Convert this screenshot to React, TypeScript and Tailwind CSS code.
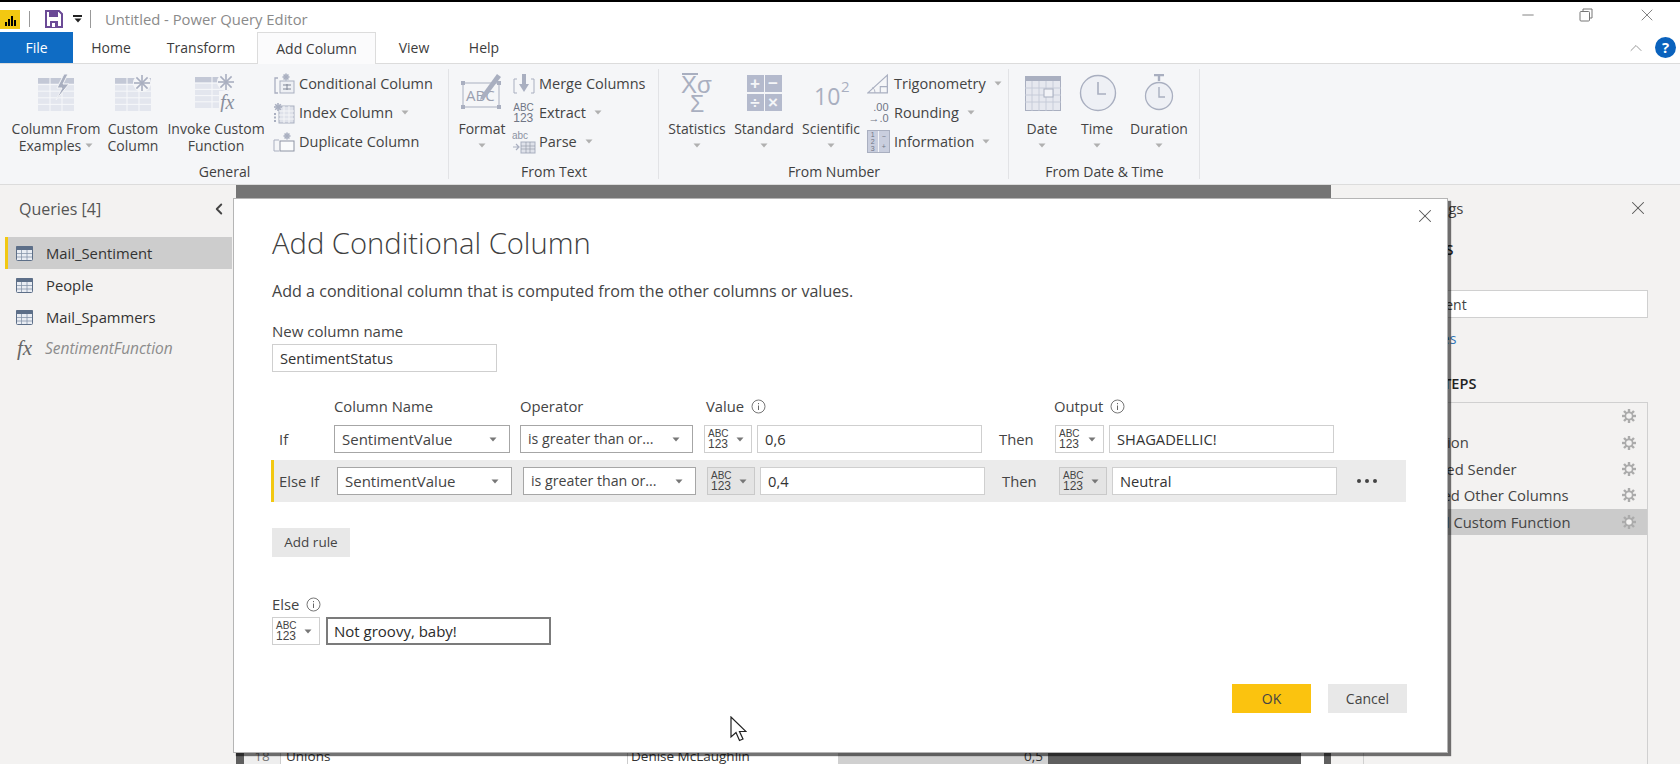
import type { ReactNode } from 'react'
import { X, ChevronLeft, ChevronUp, Minus } from 'lucide-react'

const pale = '#c3c8d6'
const paleDark = '#a9afc0'

function Caret({ className = '' }: { className?: string }) {
  return (
    <svg width="8" height="5" viewBox="0 0 8 5" className={className}>
      <path d="M0.5 0.5h7L4 4.5z" fill="currentColor" />
    </svg>
  )
}

function Burst({ x, y, r = 7 }: { x: number; y: number; r?: number }) {
  return (
    <g stroke={paleDark} strokeWidth="1.6">
      <line x1={x - r} y1={y} x2={x + r} y2={y} />
      <line x1={x} y1={y - r} x2={x} y2={y + r} />
      <line x1={x - r * 0.7} y1={y - r * 0.7} x2={x + r * 0.7} y2={y + r * 0.7} />
      <line x1={x - r * 0.7} y1={y + r * 0.7} x2={x + r * 0.7} y2={y - r * 0.7} />
    </g>
  )
}

function Grid({ x, y, w, h, cols, rows }: { x: number; y: number; w: number; h: number; cols: number; rows: number }) {
  const cells = []
  for (let i = 1; i < cols; i++) cells.push(<line key={`c${i}`} x1={x + (w * i) / cols} y1={y} x2={x + (w * i) / cols} y2={y + h} />)
  for (let i = 1; i < rows; i++) cells.push(<line key={`r${i}`} x1={x} y1={y + (h * i) / rows} x2={x + w} y2={y + (h * i) / rows} />)
  return (
    <g>
      <rect x={x} y={y} width={w} height={h} fill="#e3e6ee" />
      <rect x={x} y={y} width={w} height={h * 0.17} fill={pale} />
      <g stroke="#f7f8fa" strokeWidth="1">{cells}</g>
    </g>
  )
}

function ExamplesIcon() {
  return (
    <svg width="38" height="38" viewBox="0 0 38 38">
      <Grid x={1} y={4} w={36} h={33} cols={3} rows={5} />
      <path d="M27 0l-7 14h5l-6 12 13-16h-6l5-10z" fill={paleDark} stroke="#f5f6f8" strokeWidth="1" />
    </svg>
  )
}

function CustomIcon() {
  return (
    <svg width="38" height="38" viewBox="0 0 38 38">
      <Grid x={1} y={4} w={36} h={33} cols={3} rows={5} />
      <circle cx="28" cy="9" r="9" fill="#f5f6f8" />
      <Burst x={28} y={9} r={8} />
    </svg>
  )
}

function InvokeIcon() {
  return (
    <svg width="42" height="40" viewBox="0 0 42 40">
      <Grid x={0} y={5} w={34} h={31} cols={2} rows={5} />
      <circle cx="31" cy="10" r="9" fill="#f5f6f8" />
      <Burst x={31} y={10} r={8} />
      <rect x="24" y="19" width="18" height="21" fill="#f5f6f8" />
      <text x="25" y="37" fontSize="20" fontStyle="italic" fontFamily="Liberation Serif, serif" fill="#8a8f9d">fx</text>
    </svg>
  )
}

function ConditionalIcon() {
  return (
    <svg width="22" height="22" viewBox="0 0 22 22">
      <path d="M5 5H2v15h3" fill="none" stroke={paleDark} strokeWidth="1.3" />
      <rect x="7" y="8" width="14" height="12" fill="#eef0f4" stroke={paleDark} />
      <path d="M10 12h8M10 16h8M14 11v6" stroke="#7f8595" strokeWidth="1" />
      <Burst x={13} y={4} r={3.5} />
    </svg>
  )
}

function IndexIcon() {
  return (
    <svg width="22" height="22" viewBox="0 0 22 22">
      <rect x="6" y="4" width="15" height="17" fill="#dfe2ea" stroke={paleDark} />
      <path d="M11 4v17M16 4v17M6 9h15M6 13h15M6 17h15" stroke="#f5f6f8" />
      <Burst x={5} y={5} r={4} />
      <path d="M2 11v9" stroke={paleDark} strokeDasharray="2 1.5" strokeWidth="2" />
    </svg>
  )
}

function DuplicateIcon() {
  return (
    <svg width="22" height="22" viewBox="0 0 22 22">
      <path d="M6 9H1v11h5" fill="none" stroke={paleDark} />
      <rect x="7" y="10" width="14" height="10" fill="#fafbfc" stroke="#8e94a4" />
      <Burst x={14} y={5} r={3.5} />
    </svg>
  )
}

function FormatIcon() {
  return (
    <svg width="42" height="42" viewBox="0 0 42 42">
      <rect x="2" y="13" width="36" height="24" fill="none" stroke={paleDark} strokeWidth="1" />
      <g fill={paleDark}>
        <rect x="0" y="11" width="4" height="4" />
        <rect x="36" y="11" width="4" height="4" />
        <rect x="0" y="35" width="4" height="4" />
        <rect x="36" y="35" width="4" height="4" />
      </g>
      <text x="5" y="31" fontSize="15" fontFamily="Open Sans, sans-serif" fill="#9aa0b0">ABC</text>
      <path d="M20 26L36 4l4 3-16 21-5 2z" fill={paleDark} />
    </svg>
  )
}

function MergeIcon() {
  return (
    <svg width="22" height="22" viewBox="0 0 22 22">
      <path d="M4 6H1v14h3M18 6h3v14h-3" fill="none" stroke={paleDark} />
      <rect x="9" y="1" width="4" height="11" fill={paleDark} />
      <path d="M6 11h10l-5 8z" fill={paleDark} />
    </svg>
  )
}

function ParseIcon() {
  return (
    <span className="relative block w-[24px] h-[24px] text-[#8d93a3]">
      <span className="absolute left-0 top-0 text-[10px] leading-[11px] font-['Liberation_Sans',sans-serif]">abc</span>
      <svg width="24" height="24" viewBox="0 0 24 24" className="absolute left-0 top-0">
        <path d="M1 17h5M4 14l3 3-3 3" fill="none" stroke={paleDark} strokeWidth="1.2" />
        <rect x="9" y="12" width="14" height="11" fill="#dfe2ea" stroke={paleDark} />
        <path d="M14 12v11M18 12v11M9 16h14M9 19h14" stroke="#8d93a3" strokeWidth="0.6" />
      </svg>
    </span>
  )
}

function TrigIcon() {
  return (
    <svg width="26" height="24" viewBox="0 0 26 24">
      <path d="M1 22L23 2v20z" fill="none" stroke={paleDark} strokeWidth="1.4" />
      <path d="M15 22v-7h8" fill="none" stroke={paleDark} strokeWidth="1.2" />
      <path d="M9 22c0-3-1-5-3-6" fill="none" stroke={paleDark} />
    </svg>
  )
}

function InformationIcon() {
  return (
    <span className="flex w-[23px] h-[23px] bg-[#c9cede] border border-[#a9afc0] text-[7px] leading-[7px] text-[#f5f6f8] font-['Liberation_Sans',sans-serif]">
      <span className="w-1/2 flex flex-col justify-around items-center border-r border-[#f5f6f8] text-[#6f7585]">
        <span>1</span>
        <span>2</span>
        <span>3</span>
      </span>
      <span className="w-1/2 flex flex-col justify-around items-center text-[#6f7585]">
        <span>−</span>
        <span>+</span>
      </span>
    </span>
  )
}

function StatisticsIcon() {
  return (
    <svg width="40" height="44" viewBox="0 0 40 44" fill={paleDark} fontFamily="Liberation Sans, sans-serif" className="-mb-[4px] translate-x-[2px]">
      <rect x="3" y="1" width="16" height="2" />
      <text x="2" y="21" fontSize="24">Xσ</text>
      <text x="11" y="40" fontSize="23">Σ</text>
    </svg>
  )
}

function StandardIcon() {
  const cell = 'flex items-center justify-center bg-[#b4bacd] text-[#f5f6f8] text-[17px] font-bold leading-none w-[17px] h-[17px]'
  return (
    <span className="grid grid-cols-[17px_17px] grid-rows-[18px_18px] gap-[1px] font-['Liberation_Sans',sans-serif]">
      <span className={cell}>+</span>
      <span className={cell}>−</span>
      <span className={cell}>÷</span>
      <span className={cell}>×</span>
    </span>
  )
}

function ScientificIcon() {
  return (
    <svg width="38" height="42" viewBox="0 0 38 42" fill={paleDark} fontFamily="Open Sans, sans-serif" className="translate-x-[2px]">
      <text x="0" y="35" fontSize="23">10</text>
      <text x="27" y="22" fontSize="15">2</text>
    </svg>
  )
}

function DateIcon() {
  return (
    <svg width="36" height="36" viewBox="0 0 36 36" className="translate-x-[1px]">
      <rect x="0.5" y="0.5" width="35" height="34" fill="#e6e8ef" stroke={paleDark} />
      <rect x="0" y="0" width="36" height="5" fill={paleDark} />
      <path d="M7 5v30M14 5v30M21 5v30M28 5v30M0 12h36M0 19h36M0 26h36" stroke="#c4c9d7" strokeWidth="0.9" />
      <rect x="19" y="13" width="9" height="8" fill="#f2f3f7" stroke={paleDark} />
    </svg>
  )
}

function TimeIcon() {
  return (
    <svg width="38" height="38" viewBox="0 0 38 38" className="translate-x-[1px]">
      <circle cx="19" cy="19" r="17.5" fill="#eef0f5" stroke={paleDark} strokeWidth="1.4" />
      <path d="M19 8v12h8" fill="none" stroke={paleDark} strokeWidth="1.6" />
    </svg>
  )
}

function DurationIcon() {
  return (
    <svg width="30" height="38" viewBox="0 0 30 38">
      <path d="M10 1h10M15 1v6" stroke={paleDark} strokeWidth="2.4" />
      <circle cx="15" cy="22" r="13.5" fill="#eef0f5" stroke={paleDark} strokeWidth="1.3" />
      <path d="M15 13v10h6" fill="none" stroke={paleDark} strokeWidth="1.4" />
    </svg>
  )
}

function TableSmall() {
  return (
    <svg width="17" height="15" viewBox="0 0 17 15">
      <rect x="0.5" y="0.5" width="16" height="14" rx="1" fill="#e9edf3" stroke="#5d6f88" />
      <rect x="0" y="0" width="17" height="4" rx="1" fill="#5d6f88" />
      <path d="M5.5 4v10M11 4v10M1 7.5h15M1 11h15" stroke="#8796aa" strokeWidth="0.8" />
    </svg>
  )
}

function Gear() {
  return (
    <svg width="16" height="16" viewBox="0 0 16 16">
      <g stroke="#ababab" strokeWidth="2.4">
        <line x1="8" y1="1" x2="8" y2="15" />
        <line x1="1" y1="8" x2="15" y2="8" />
        <line x1="3" y1="3" x2="13" y2="13" />
        <line x1="13" y1="3" x2="3" y2="13" />
      </g>
      <circle cx="8" cy="8" r="3.6" fill="#f3f2f1" stroke="#ababab" strokeWidth="1.6" />
    </svg>
  )
}

function Info() {
  return (
    <svg width="15" height="15" viewBox="0 0 15 15" className="text-[#666]">
      <circle cx="7.5" cy="7.5" r="6.5" fill="none" stroke="currentColor" strokeWidth="0.9" />
      <path d="M7.5 6.5v4.5M7.5 4v1.2" stroke="currentColor" strokeWidth="1" />
    </svg>
  )
}

function LargeButton({ w, icon, lines, caretLine }: { w: string; icon: ReactNode; lines: string[]; caretLine?: boolean }) {
  return (
    <div className={`${w} flex flex-col items-center`}>
      <div className="h-[45px] mt-[3px] flex items-end justify-center">{icon}</div>
      <div className="mt-[8px] flex flex-col items-center text-[14px] leading-[17px] text-[#444] whitespace-nowrap">
        {lines.map((line, i) => (
          <span key={line} className="flex items-center gap-[4px]">
            {line}
            {caretLine && i === lines.length - 1 && <Caret className="text-[#b0b0b0]" />}
          </span>
        ))}
        {lines.length === 1 && <Caret className="text-[#b0b0b0] mt-[6px]" />}
      </div>
    </div>
  )
}

function SmallButton({ icon, label, caret }: { icon: ReactNode; label: string; caret?: boolean }) {
  return (
    <div className="h-[29px] flex items-center gap-[4px] text-[14.5px] text-[#444] whitespace-nowrap">
      <span className="w-[23px] flex justify-center shrink-0">{icon}</span>
      <span>{label}</span>
      {caret && <Caret className="ml-[4px] text-[#b0b0b0]" />}
    </div>
  )
}

function Group({ w, label, pl, children }: { w: string; label: string; pl: string; children: ReactNode }) {
  return (
    <div className={`${w} h-full flex flex-col relative`}>
      <div className={`h-[98px] flex ${pl}`}>{children}</div>
      <div className="pt-px text-center text-[14px] leading-[18px] font-medium text-[#3f3f3f]">{label}</div>
      <span className="absolute right-0 top-[5px] bottom-[5px] w-px bg-[#e2e3e6]" />
    </div>
  )
}

function TypeStack() {
  return (
    <span className="flex flex-col leading-[10px] text-[#444] font-['Liberation_Sans',sans-serif]">
      <span className="text-[10px]">ABC</span>
      <span className="text-[12px]">123</span>
    </span>
  )
}

function TypeButton({ w, muted }: { w: string; muted?: boolean }) {
  return (
    <div className={`${w} h-[28px] shrink-0 border flex items-center justify-between pl-[3px] pr-[7px] ${muted ? 'bg-[#e4e4e4] border-[#c9c9c9]' : 'bg-white border-[#cfcfcf]'}`}>
      <TypeStack />
      <Caret className="text-[#777]" />
    </div>
  )
}

function SelectBox({ w, label, small }: { w: string; label: string; small?: boolean }) {
  return (
    <div className={`${w} h-[28px] shrink-0 bg-white border border-[#a6a6a6] flex items-center justify-between pl-[7px] pr-[12px] text-[#444] ${small ? 'text-[14.2px]' : 'text-[15px]'}`}>
      <span>{label}</span>
      <Caret className="text-[#777]" />
    </div>
  )
}

function TextBox({ w, value, strong }: { w: string; value: string; strong?: boolean }) {
  return (
    <div className={`${w} h-[28px] shrink-0 bg-white flex items-center text-[14.7px] ${strong ? 'border-2 border-[#7b7b7b] pl-[6px] text-[15px] text-[#2b2b2b]' : 'border border-[#cfcfcf] pl-[7px] text-[#333]'}`}>
      {value}
    </div>
  )
}

const steps = ['Source', 'Navigation', 'Expanded Sender', 'Removed Other Columns', 'Invoked Custom Function']

function ConditionalDialog() {
  return (
    <div className="absolute left-[233px] top-[198px] w-[1215px] h-[555px] bg-white border border-[#b5b5b5] shadow-[3px_3px_1px_rgba(0,0,0,0.55)] pl-[38px] text-[#444]">
      <button className="absolute right-[11px] top-[6px] text-[#555]">
        <X size={22} strokeWidth={1.1} />
      </button>
      <h2 className="mt-[24px] text-[29.2px] leading-[40px] font-light text-[#3f3f3f]">Add Conditional Column</h2>
      <p className="mt-[17px] text-[16.1px] leading-[22px]">Add a conditional column that is computed from the other columns or values.</p>
      <div className="mt-[19px] text-[15px] leading-[20px]">New column name</div>
      <div className="mt-[3px]">
        <TextBox w="w-[225px]" value="SentimentStatus" />
      </div>

      <div className="mt-[24px] flex text-[14.8px] leading-[20px]">
        <span className="w-[62px]" />
        <span className="w-[186px]">Column Name</span>
        <span className="w-[186px]">Operator</span>
        <span className="w-[348px] flex items-center gap-[7px]">Value <Info /></span>
        <span className="flex items-center gap-[7px]">Output <Info /></span>
      </div>

      <div className="mt-[9px] flex items-center text-[14.8px]">
        <span className="w-[62px] pl-[7px]">If</span>
        <SelectBox w="w-[176px]" label="SentimentValue" />
        <span className="w-[10px]" />
        <SelectBox w="w-[173px]" label="is greater than or..." small />
        <span className="w-[11px]" />
        <TypeButton w="w-[48px]" />
        <span className="w-[5px]" />
        <TextBox w="w-[225px]" value="0,6" />
        <span className="w-[73px] pl-[17px]">Then</span>
        <TypeButton w="w-[49px]" />
        <span className="w-[5px]" />
        <TextBox w="w-[225px]" value="SHAGADELLIC!" />
      </div>

      <div className="mt-[7px] -ml-px w-[1135px] h-[42px] bg-[#ebebeb] border-l-[3px] border-[#f2c811] flex items-center text-[14.8px]">
        <span className="w-[63px] pl-[5px]">Else If</span>
        <SelectBox w="w-[175px]" label="SentimentValue" />
        <span className="w-[11px]" />
        <SelectBox w="w-[173px]" label="is greater than or..." small />
        <span className="w-[11px]" />
        <TypeButton w="w-[48px]" muted />
        <span className="w-[5px]" />
        <TextBox w="w-[225px]" value="0,4" />
        <span className="w-[74px] pl-[17px]">Then</span>
        <TypeButton w="w-[48px]" muted />
        <span className="w-[5px]" />
        <TextBox w="w-[225px]" value="Neutral" />
        <span className="w-[60px] flex justify-center gap-[4px]">
          <i className="w-[4px] h-[4px] rounded-full bg-[#444]" />
          <i className="w-[4px] h-[4px] rounded-full bg-[#444]" />
          <i className="w-[4px] h-[4px] rounded-full bg-[#444]" />
        </span>
      </div>

      <button className="mt-[26px] block w-[78px] h-[29px] bg-[#e8e8e8] text-[13.5px] text-[#444]">Add rule</button>

      <div className="mt-[37px] flex items-center gap-[7px] text-[14.8px] leading-[20px]">Else <Info /></div>
      <div className="mt-[3px] flex items-center gap-[6px]">
        <TypeButton w="w-[48px]" />
        <TextBox w="w-[225px]" value="Not groovy, baby!" strong />
      </div>

      <div className="mt-[39px] w-[1135px] flex justify-end gap-[17px] text-[14px]">
        <button className="w-[79px] h-[29px] bg-[#fbc30f] text-[#444]">OK</button>
        <button className="w-[79px] h-[29px] bg-[#e8e8e8] text-[#444]">Cancel</button>
      </div>
    </div>
  )
}

export default function App() {
  return (
    <div className="relative w-[1680px] h-[764px] overflow-hidden bg-white font-['Open_Sans',sans-serif] flex flex-col">
      {/* title bar */}
      <header className="h-[32px] shrink-0 border-t-2 border-black pt-[4px] flex items-center relative">
        <span className="w-[20px] h-[19px] bg-[#f2c811] flex items-end justify-center gap-px pb-[3px]">
          <i className="w-[2px] h-[4px] bg-black" />
          <i className="w-[2px] h-[7px] bg-black" />
          <i className="w-[2px] h-[10px] bg-black" />
          <i className="w-[2px] h-[6px] bg-black" />
        </span>
        <span className="ml-[9px] w-px h-[16px] bg-[#999]" />
        <svg width="18" height="18" viewBox="0 0 18 18" className="ml-[15px]">
          <path d="M1 1h13l3 3v13H1z" fill="none" stroke="#6b4a96" strokeWidth="2" />
          <path d="M4 2h9v5H4zM5 11h8v6H5z" fill="#6b4a96" />
          <rect x="7" y="13" width="3" height="4" fill="#fff" />
        </svg>
        <span className="ml-[10px] flex flex-col items-center gap-[1px]">
          <i className="w-[9px] h-[2px] bg-[#222]" />
          <Caret className="text-[#222]" />
        </span>
        <span className="ml-[8px] w-px h-[18px] bg-[#999]" />
        <span className="ml-[14px] text-[14.8px] text-[#8a8a8a]">Untitled - Power Query Editor</span>
        <div className="ml-auto -mt-[8px] flex items-center text-[#777]">
          <Minus size={18} strokeWidth={1.2} />
          <svg width="14" height="14" viewBox="0 0 14 14" className="ml-[42px]">
            <rect x="1" y="3.5" width="9.5" height="9.5" rx="1" fill="none" stroke="currentColor" />
            <path d="M4 3.5V1h9v9h-2.5" fill="none" stroke="currentColor" />
          </svg>
          <X size={20} strokeWidth={1.1} className="ml-[44px] mr-[23px]" />
        </div>
      </header>

      {/* tabs */}
      <nav className="h-[31px] shrink-0 flex items-stretch text-[14px] text-[#3c3c3c] relative z-10">
        <div className="w-[73px] bg-[#0f6cc4] text-white flex items-center justify-center font-medium">File</div>
        <div className="w-[76px] flex items-center justify-center">Home</div>
        <div className="w-[104px] flex items-center justify-center">Transform</div>
        <div className="w-[4px]" />
        <div className="w-[119px] bg-[#fbfbfc] border border-b-0 border-[#dcdcdc] flex items-center justify-center -mb-px">Add Column</div>
        <div className="w-[76px] flex items-center justify-center">View</div>
        <div className="w-[64px] flex items-center justify-center">Help</div>
        <div className="ml-auto flex items-center">
          <ChevronUp size={20} strokeWidth={1.2} className="text-[#999]" />
          <span className="ml-[9px] mr-[4px] w-[21px] h-[21px] rounded-full bg-[#0a62bd] text-white text-[15px] font-bold flex items-center justify-center">?</span>
        </div>
      </nav>

      {/* ribbon */}
      <section className="h-[122px] shrink-0 bg-[#f5f6f8] border-y border-[#dcdcdc] flex">
        <Group w="w-[449px]" label="General" pl="pl-[8px]">
          <LargeButton w="w-[96px]" icon={<ExamplesIcon />} lines={['Column From', 'Examples']} caretLine />
          <LargeButton w="w-[58px]" icon={<CustomIcon />} lines={['Custom', 'Column']} />
          <LargeButton w="w-[108px]" icon={<InvokeIcon />} lines={['Invoke Custom', 'Function']} />
          <div className="ml-[2px] pt-[5px]">
            <SmallButton icon={<ConditionalIcon />} label="Conditional Column" />
            <SmallButton icon={<IndexIcon />} label="Index Column" caret />
            <SmallButton icon={<DuplicateIcon />} label="Duplicate Column" />
          </div>
        </Group>
        <Group w="w-[210px]" label="From Text" pl="pl-[1px]">
          <LargeButton w="w-[64px]" icon={<FormatIcon />} lines={['Format']} />
          <div className="-ml-[2px] pt-[5px]">
            <SmallButton icon={<MergeIcon />} label="Merge Columns" />
            <SmallButton
              icon={
                <span className="text-[#6f7585] font-['Liberation_Sans',sans-serif] flex flex-col leading-[10px]">
                  <span className="text-[10px]">ABC</span>
                  <span className="text-[12px]">123</span>
                </span>
              }
              label="Extract"
              caret
            />
            <SmallButton icon={<ParseIcon />} label="Parse" caret />
          </div>
        </Group>
        <Group w="w-[350px]" label="From Number" pl="pl-[6px]">
          <LargeButton w="w-[64px]" icon={<StatisticsIcon />} lines={['Statistics']} />
          <LargeButton w="w-[70px]" icon={<StandardIcon />} lines={['Standard']} />
          <LargeButton w="w-[64px]" icon={<ScientificIcon />} lines={['Scientific']} />
          <div className="ml-[4px] pt-[5px]">
            <SmallButton icon={<TrigIcon />} label="Trigonometry" caret />
            <SmallButton
              icon={
                <span className="text-[#6f7585] font-['Liberation_Sans',sans-serif] text-[11px] leading-[11px] text-right">
                  <span className="block">.00</span>
                  <span className="block">→.0</span>
                </span>
              }
              label="Rounding"
              caret
            />
            <SmallButton icon={<InformationIcon />} label="Information" caret />
          </div>
        </Group>
        <Group w="w-[191px]" label="From Date & Time" pl="pl-[1px]">
          <LargeButton w="w-[64px]" icon={<DateIcon />} lines={['Date']} />
          <LargeButton w="w-[46px]" icon={<TimeIcon />} lines={['Time']} />
          <LargeButton w="w-[78px]" icon={<DurationIcon />} lines={['Duration']} />
        </Group>
      </section>

      <main className="flex-1 flex min-h-0">
        {/* queries pane */}
        <aside className="w-[232px] shrink-0 bg-[#f3f2f1]">
          <div className="h-[52px] pl-[19px] pr-[4px] pb-[4px] flex items-center justify-between text-[16px] text-[#555]">
            <span>Queries [4]</span>
            <ChevronLeft size={18} strokeWidth={2.5} className="text-[#444]" />
          </div>
          <div className="text-[14.8px] text-[#333]">
            <div className="ml-[5px] h-[32px] bg-[#cdcdcd] border-l-[3px] border-[#f2c811] flex items-center pl-[8px] gap-[13px]">
              <TableSmall />
              Mail_Sentiment
            </div>
            <div className="ml-[5px] h-[32px] border-l-[3px] border-transparent flex items-center pl-[8px] gap-[13px]">
              <TableSmall />
              People
            </div>
            <div className="ml-[5px] h-[32px] border-l-[3px] border-transparent flex items-center pl-[8px] gap-[13px]">
              <TableSmall />
              Mail_Spammers
            </div>
            <div className="ml-[5px] h-[31px] border-l-[3px] border-transparent flex items-center pl-[9px] gap-[12px] text-[15.5px] text-[#8c8c8c] italic">
              <span className="w-[16px] font-['Liberation_Serif',serif] text-[21px] leading-none text-[#666]">fx</span>
              SentimentFunction
            </div>
          </div>
        </aside>

        {/* preview behind the dialog */}
        <div className="flex-1 flex flex-col justify-between pl-[4px] bg-[#f3f2f1]">
          <div className="h-[13px] bg-[#757575]" />
          <div className="h-[14px] flex items-center text-[13.5px] text-[#333] leading-none overflow-hidden">
            <span className="w-[8px] h-full bg-[#5f5f5f]" />
            <span className="w-[37px] h-full bg-[#eeeeee] text-center text-[#777] border-r border-[#ccc]">18</span>
            <span className="w-[347px] h-full bg-white pl-[5px] border-r border-[#ccc]">Unions</span>
            <span className="w-[210px] h-full bg-white pl-[3px]">Denise McLaughlin</span>
            <span className="w-[210px] h-full bg-[#d0d0d0] text-right pr-[5px]">0,5</span>
            <span className="w-[253px] h-full bg-[#5f5f5f]" />
            <span className="w-[23px] h-full bg-white" />
            <span className="flex-1 h-full bg-[#5f5f5f]" />
          </div>
        </div>

        {/* query settings pane */}
        <aside className="w-[349px] shrink-0 bg-[#f3f2f1] pr-[32px] text-[#444] relative">
          <button className="absolute right-[31px] top-[12px] text-[#555]">
            <X size={22} strokeWidth={1.1} />
          </button>
          <div className="mt-[13px] pl-[30px] text-[15px] leading-[20px] whitespace-nowrap">Query Settings</div>
          <div className="mt-[22px] pl-[38px] text-[14.5px] leading-[20px] font-semibold text-[#222]">PROPERTIES</div>
          <div className="h-[30px]" />
          <div className="h-[28px] ml-[14px] bg-white border border-[#d0d0d0] pl-[20px] flex items-center text-[14px]">Mail_Sentiment</div>
          <div className="mt-[11px] pl-[38px] text-[14px] leading-[20px] text-[#2f75b5]">All Properties</div>
          <div className="mt-[25px] pl-[42px] text-[14.5px] leading-[20px] font-semibold text-[#222]">APPLIED STEPS</div>
          <div className="mt-[8px] ml-[32px] h-[362px] bg-[#f3f2f1] border-x border-t border-[#d0d0d0] text-[14.8px]">
            {steps.map((step, i) => (
              <div key={step} className={`h-[26.4px] flex items-center justify-between pl-[31px] pr-[10px] ${i === 4 ? 'bg-[#cbcbcb]' : ''}`}>
                <span>{step}</span>
                <Gear />
              </div>
            ))}
          </div>
        </aside>
      </main>

      <ConditionalDialog />

      {/* mouse pointer */}
      <svg width="17" height="26" viewBox="0 0 17 26" className="absolute left-[730px] top-[716px]">
        <path d="M1 1v20l5-4.5 3.5 8 3.5-1.5-3.5-7.5H16z" fill="#fff" stroke="#222" strokeWidth="1.2" />
      </svg>
    </div>
  )
}
